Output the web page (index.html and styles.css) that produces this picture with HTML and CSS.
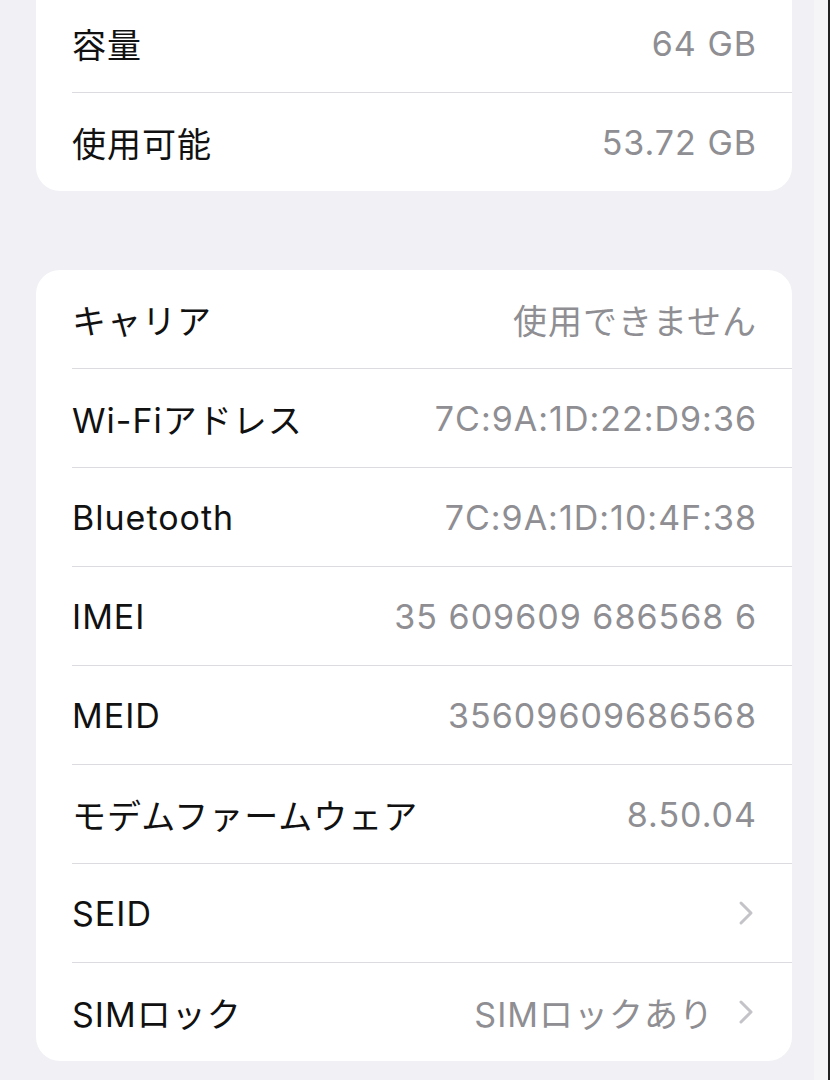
FILE: index.html
```html
<!DOCTYPE html>
<html lang="ja">
<head>
    <meta name="viewport" content="width=device-width,initial-scale=1.0">
    <title>情報</title>
    <link rel="stylesheet" href="styles.css">
</head>
<body>

    <div class="group group-top">
        <div class="row">
            <span class="label">容量</span>
            <span class="value">64 GB</span>
        </div>
        <div class="row">
            <span class="label">使用可能</span>
            <span class="value">53.72 GB</span>
        </div>
    </div>

    <div class="group">
        <div class="row">
            <span class="label">キャリア</span>
            <span class="value">使用できません</span>
        </div>
        <div class="row">
            <span class="label">Wi-Fiアドレス</span>
            <span class="value">7C:9A:1D:22:D9:36</span>
        </div>
        <div class="row">
            <span class="label">Bluetooth</span>
            <span class="value">7C:9A:1D:10:4F:38</span>
        </div>
        <div class="row">
            <span class="label">IMEI</span>
            <span class="value">35 609609 686568 6</span>
        </div>
        <div class="row">
            <span class="label">MEID</span>
            <span class="value">35609609686568</span>
        </div>
        <div class="row">
            <span class="label">モデムファームウェア</span>
            <span class="value">8.50.04</span>
        </div>
        <div class="row link">
            <span class="label">SEID</span>
            <svg class="chevron" width="16" height="26" viewBox="0 0 16 26"><path d="M3 3 L13 13 L3 23" fill="none" stroke="#c4c4c8" stroke-width="3" stroke-linecap="round" stroke-linejoin="round"/></svg>
        </div>
        <div class="row link">
            <span class="label">SIMロック</span>
            <span class="value">SIMロックあり</span>
            <svg class="chevron" width="16" height="26" viewBox="0 0 16 26"><path d="M3 3 L13 13 L3 23" fill="none" stroke="#c4c4c8" stroke-width="3" stroke-linecap="round" stroke-linejoin="round"/></svg>
        </div>
    </div>

</body>
</html>
```

FILE: styles.css
```css
body {
    margin: 0;
    height: 1080px;
    overflow: hidden;
    background: linear-gradient(to right, #f0f0f5 814px, #f5f5f8 814px, #f5f5f8 828px, #222 828px);
    font-family: Inter, "Noto Sans CJK JP", sans-serif;
    color: #000;
}

.group {
    margin: 0 38px 0 36px;
    background-color: #fff;
    border-radius: 24px;
    overflow: hidden;
}

.group-top {
    margin-top: -30px;
    padding-top: 24px;
    margin-bottom: 79px;
}

.row {
    display: flex;
    align-items: center;
    height: 98px;
    margin-left: 36px;
    padding-right: 36px;
    border-top: 1px solid #dcdce0;
    font-size: 34px;
    letter-spacing: 1px;
}

.row:first-child {
    border-top: none;
}

.label {
    flex: 1;
    color: #111;
}

.value {
    color: #8e8e93;
    margin-right: -1px;
}

.link .value {
    margin-right: 24px;
}

.chevron {
    display: block;
    margin-right: 2px;
}
```
